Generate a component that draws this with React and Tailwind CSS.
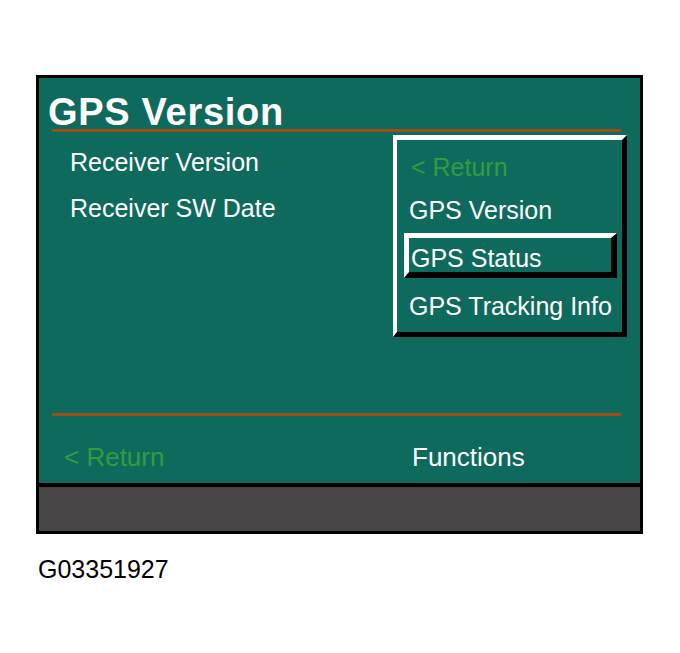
export default function App() {
  const font = "font-['Liberation_Sans',Arial,sans-serif]";
  return (
    <div className={`w-[680px] h-[653px] bg-white pt-[75px] pl-[36px] ${font}`}>
      <div className="w-[607px] border-[3px] border-black">
        <div className="relative h-[405px] bg-[#0e6a5d] flex flex-col">
          <div className="pt-[17px] pl-[9px] text-[38px] leading-[34px] font-bold tracking-[0.7px] text-white">
            GPS Version
          </div>
          <div className="ml-[13px] w-[569px] h-[3px] bg-[#9a4f14]" />
          <div className="pl-[31px] text-white text-[25px] leading-[25px]">
            <div className="mt-[18px]">Receiver Version</div>
            <div className="mt-[21px]">Receiver SW Date</div>
          </div>
          <div className="mt-auto pb-[13px]">
            <div className="ml-[13px] w-[569px] h-[3px] bg-[#9a4f14]" />
            <div className="mt-[28px] flex pl-[25px] text-[26px] leading-[26px]">
              <span className="w-[348px] text-[#2e9e3e]">&lt; Return</span>
              <span className="text-white">Functions</span>
            </div>
          </div>

          <div className="absolute left-[354px] top-[57px] w-[234px] h-[202px] border-t-[5px] border-l-[4px] border-r-[5px] border-b-[5px] border-t-white border-l-white border-r-black border-b-black text-[25px] leading-[25px]">
            <div className="pt-[15px] pl-[14px] text-[#2e9e3e]">&lt; Return</div>
            <div className="mt-[18px] pl-[12px] text-white">GPS Version</div>
            <div className="mt-[10px] ml-[7px] w-[213px] h-[45px] border-t-[5px] border-l-[5px] border-r-[6px] border-b-[6px] border-t-white border-l-white border-r-black border-b-black pt-[10px] pl-[2px] leading-[20px] text-white">
              GPS Status
            </div>
            <div className="mt-[16px] pl-[12px] text-white">GPS Tracking Info</div>
          </div>
        </div>
        <div className="h-[4px] bg-black" />
        <div className="h-[44px] bg-[#474545]" />
      </div>
      <div className="mt-[23px] ml-[2px] text-[25px] leading-[24px] text-black">G03351927</div>
    </div>
  );
}
